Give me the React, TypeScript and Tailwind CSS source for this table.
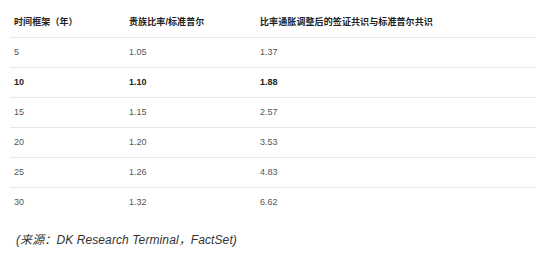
const rows = [
  { years: "5", noble: "1.05", adjusted: "1.37" },
  { years: "10", noble: "1.10", adjusted: "1.88", bold: true },
  { years: "15", noble: "1.15", adjusted: "2.57" },
  { years: "20", noble: "1.20", adjusted: "3.53" },
  { years: "25", noble: "1.26", adjusted: "4.83" },
  { years: "30", noble: "1.32", adjusted: "6.62" },
];

export default function App() {
  return (
    <main
      className="h-[256px] w-[554px] overflow-hidden bg-white"
      style={{ fontFamily: '"Liberation Sans", Arial, "Noto Sans CJK SC", sans-serif' }}
    >
      <div className="ml-[10px] w-[526px]">
        <div className="grid h-[38px] grid-cols-[115px_131px_1fr] items-center border-b border-[#e8e8e8] pt-[9px] pl-[4px] text-[9px] font-bold tracking-[0.1px] text-[#222]">
          <div>时间框架（年）</div>
          <div>贵族比率/标准普尔</div>
          <div>比率通胀调整后的签证共识与标准普尔共识</div>
        </div>

        {rows.map((row, i) => (
          <div
            key={row.years}
            className={
              "grid h-[30px] grid-cols-[115px_131px_1fr] items-center pl-[4px] text-[9px] " +
              (i < rows.length - 1 ? "border-b border-[#e8e8e8] " : "") +
              (row.bold ? "font-bold text-[#222]" : "text-[#555]")
            }
          >
            <div>{row.years}</div>
            <div>{row.noble}</div>
            <div>{row.adjusted}</div>
          </div>
        ))}
      </div>

      <p className="mt-[13px] pl-[16px] text-[12px] italic tracking-[0.1px] text-[#333]">
        (来源：DK Research Terminal，FactSet)
      </p>
    </main>
  );
}
